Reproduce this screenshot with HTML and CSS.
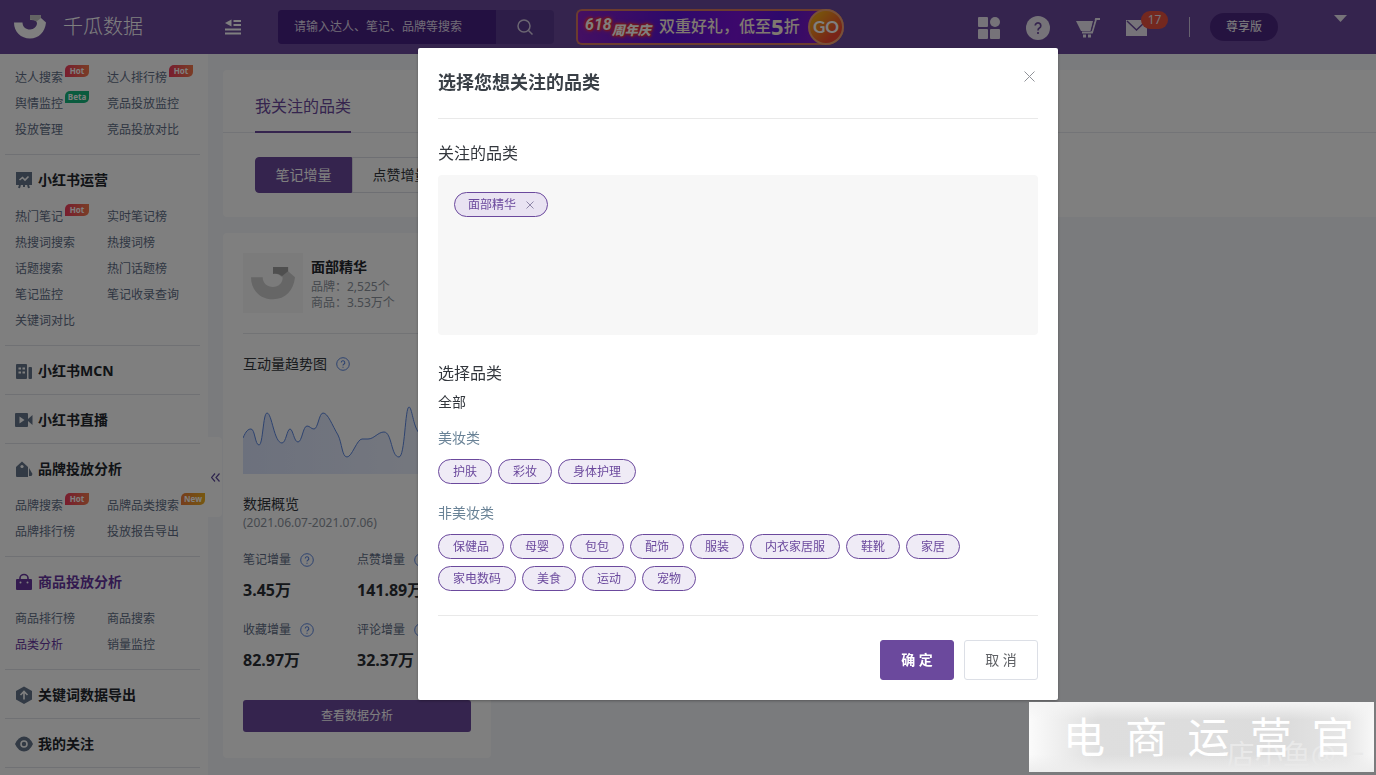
FILE: index.html
```html
<!DOCTYPE html>
<html lang="zh-CN">
<head>
<meta charset="utf-8">
<title>千瓜数据</title>
<link rel="stylesheet" href="styles.css">
</head>
<body>
<svg class="defs" aria-hidden="true">
  <defs>
    <symbol id="logo" viewBox="0 0 32 24">
      <path d="M0 7.500H8.500C8.500 12 12 14.500 16 14.500s7-3 7-6.500c0-2-3-3.500-7-3V0h11v3l5 4.500C31 17 25 23.500 16 23.500S0 17 0 7.500z" fill="currentColor"/>
      <path d="M16 0h11v3l-5 4c-1-2-4-2.500-6-2z" fill="#000" opacity=".22"/>
    </symbol>
    <symbol id="help" viewBox="0 0 14 14">
      <circle cx="7" cy="7" r="6.300" fill="none" stroke="currentColor"/>
      <path d="M5.200 5.500a1.800 1.800 0 1 1 2.600 1.700c-.6.300-.8.600-.8 1.300M7 9.700v1.100" fill="none" stroke="currentColor" stroke-width="1.100"/>
    </symbol>
  </defs>
</svg>

<header class="topbar">
  <a class="brand" href="#"><svg class="brand-mark"><use href="#logo"/></svg><span>千瓜数据</span></a>
  <button class="icon-btn fold" aria-label="收起菜单">
    <svg width="16" height="16" viewBox="0 0 16 16"><path d="M8.500 2H16M8.500 6H16M0 10.500h16M0 14.500h16" stroke="currentColor" stroke-width="1.800"/><path d="M6.500 .5v7L0 4z" fill="currentColor"/></svg>
  </button>
  <form class="search">
    <input type="text" aria-label="搜索" placeholder="请输入达人、笔记、品牌等搜索">
    <button type="button" aria-label="搜索"><svg width="16" height="16" viewBox="0 0 16 16"><circle cx="7" cy="7" r="6" fill="none" stroke="currentColor" stroke-width="1.500"/><path d="M11.500 11.500l4 4" stroke="currentColor" stroke-width="1.500"/></svg></button>
  </form>
  <a class="promo" href="#">
    <span class="promo-tag"><b>618</b><i>周年庆</i></span>
    <span class="promo-text">双重好礼，低至<b>5</b>折</span>
    <span class="promo-go">GO</span>
  </a>
  <nav class="tools">
    <button class="icon-btn" aria-label="应用"><svg width="22" height="22" viewBox="0 0 22 22" fill="currentColor"><rect width="10" height="10" rx="1"/><circle cx="17" cy="5" r="5"/><rect y="12" width="10" height="10" rx="1"/><rect x="12" y="12" width="10" height="10" rx="1"/></svg></button>
    <button class="icon-btn" aria-label="帮助"><svg width="24" height="24" viewBox="0 0 24 24"><circle cx="12" cy="12" r="12" fill="currentColor"/><path d="M9.200 9.600a2.800 2.800 0 1 1 4.200 2.500c-1 .6-1.400 1-1.400 2.400M12 16v2" fill="none" stroke="#6b499d" stroke-width="1.700"/></svg></button>
    <button class="icon-btn" aria-label="购物车"><svg width="24" height="20" viewBox="0 0 24 20"><path d="M0 3h17l-2.500 10H5z" fill="currentColor"/><path d="M24 1h-4l-4 13.500H6" fill="none" stroke="currentColor" stroke-width="2"/><path d="M18.300 2l-3 11" stroke="#6b499d"/><rect x="7" y="16.500" width="3" height="3" fill="currentColor"/><rect x="12" y="16.500" width="3" height="3" fill="currentColor"/></svg></button>
    <button class="icon-btn mail" aria-label="消息"><svg width="22" height="16" viewBox="0 0 22 16"><rect width="21" height="16" fill="currentColor"/><path d="M1 1l9.500 9L20 1" fill="none" stroke="#6b499d" stroke-width="1.500"/></svg><span class="count">17</span></button>
    <span class="rule"></span>
    <button class="plan">尊享版</button>
    <button class="icon-btn caret" aria-label="账户"><svg width="13" height="7" viewBox="0 0 13 7"><path d="M0 0h13L6.500 7z" fill="currentColor"/></svg></button>
  </nav>
</header>

<div class="layout">
  <aside class="sidebar">
    <section>
      <div class="links">
        <a href="#">达人搜索<em class="flag hot">Hot</em></a><a href="#">达人排行榜<em class="flag hot">Hot</em></a>
        <a href="#">舆情监控<em class="flag beta">Beta</em></a><a href="#">竞品投放监控</a>
        <a href="#">投放管理</a><a href="#">竞品投放对比</a>
      </div>
    </section>
    <section>
      <h2><svg viewBox="0 0 18 18"><path d="M1 1h16v13H1z" fill="currentColor"/><path d="M5 14l-1 3M13 14l1 3M9 14v2" stroke="currentColor" stroke-width="2"/><path d="M4.500 9l3-2.500L10 9l3.500-3.500" fill="none" stroke="#fff" stroke-width="1.600"/></svg>小红书运营</h2>
      <div class="links">
        <a href="#">热门笔记<em class="flag hot">Hot</em></a><a href="#">实时笔记榜</a>
        <a href="#">热搜词搜索</a><a href="#">热搜词榜</a>
        <a href="#">话题搜索</a><a href="#">热门话题榜</a>
        <a href="#">笔记监控</a><a href="#">笔记收录查询</a>
        <a href="#">关键词对比</a>
      </div>
    </section>
    <section>
      <h2><svg viewBox="0 0 18 18"><rect x="1" y="2" width="11" height="15" rx="1" fill="currentColor"/><rect x="13.500" y="5" width="3.500" height="12" rx="1" fill="currentColor"/><path d="M3.500 6.500h2.500M7.500 6.500H10M3.500 10.500h2.500M7.500 10.500H10" stroke="#fff" stroke-width="2"/></svg>小红书MCN</h2>
    </section>
    <section>
      <h2><svg viewBox="0 0 18 18"><rect y="2" width="13" height="14" rx="1" fill="currentColor"/><path d="M13 8l4.500-4v10L13 10z" fill="currentColor"/><path d="M4.500 5.500v7l5-3.500z" fill="#fff"/></svg>小红书直播</h2>
    </section>
    <section>
      <h2><svg viewBox="0 0 18 18"><path d="M1 7l6-5.500L13 7v10H2q-1 0-1-1z" fill="currentColor"/><path d="M14 8l3.500 6-1 2H14z" fill="currentColor"/><circle cx="7" cy="6.500" r="1.600" fill="#fff"/></svg>品牌投放分析</h2>
      <div class="links">
        <a href="#">品牌搜索<em class="flag hot">Hot</em></a><a href="#">品牌品类搜索<em class="flag new">New</em></a>
        <a href="#">品牌排行榜</a><a href="#">投放报告导出</a>
      </div>
    </section>
    <section class="active">
      <h2><svg viewBox="0 0 18 18"><rect x="1" y="6" width="16" height="11" rx="1" fill="currentColor"/><path d="M5 7V5a4 3.500 0 0 1 8 0v2" fill="none" stroke="currentColor" stroke-width="1.600"/><circle cx="5.500" cy="9.500" r="1" fill="#fff"/><circle cx="12.500" cy="9.500" r="1" fill="#fff"/></svg>商品投放分析</h2>
      <div class="links">
        <a href="#">商品排行榜</a><a href="#">商品搜索</a>
        <a href="#" class="current">品类分析</a><a href="#">销量监控</a>
      </div>
    </section>
    <section>
      <h2><svg viewBox="0 0 18 18"><path d="M9 0.500l8 4.500v8.500l-8 4.500-8-4.500V5z" fill="currentColor"/><path d="M9 13.500V6M5.500 9L9 5.500 12.500 9" fill="none" stroke="#fff" stroke-width="1.600"/></svg>关键词数据导出</h2>
    </section>
    <section>
      <h2><svg viewBox="0 0 18 18"><path d="M0 9q3.500-7.500 9-7.500T18 9q-3.500 7.500-9 7.500T0 9z" fill="currentColor"/><circle cx="9" cy="9" r="3" fill="none" stroke="#fff" stroke-width="1.600"/></svg>我的关注</h2>
    </section>
    <section></section>
    <button class="handle" aria-label="收起侧栏"><svg width="9" height="9" viewBox="0 0 9 9"><path d="M4 .5l-3.500 4 3.500 4M8.500.5L5 4.500l3.500 4" fill="none" stroke="currentColor" stroke-width="1.200"/></svg></button>
  </aside>

  <main class="main">
    <section class="panel">
      <div class="tabs"><a href="#">我关注的品类</a></div>
      <div class="segments"><button class="on">笔记增量</button><button>点赞增量</button></div>
    </section>
    <article class="card">
      <div class="card-head">
        <div class="thumb"><svg><use href="#logo"/></svg></div>
        <div>
          <h3>面部精华</h3>
          <p>品牌：2,525个</p>
          <p>商品：3.53万个</p>
        </div>
      </div>
      <h4>互动量趋势图<svg class="help"><use href="#help"/></svg></h4>
      <svg class="chart" viewBox="0 0 228 74" preserveAspectRatio="none">
        <defs><linearGradient id="area"><stop offset="0" stop-color="#d9e2fb"/><stop offset="1" stop-color="#eff3fd"/></linearGradient></defs>
        <path fill="url(#area)" d="M0 38C3 31 5 29 8 29c4 0 4 16 8 16s4-32 8-32c5 0 7 30 15 30 4 0 5-14 8-14s4 13 8 13 5-16 9-16c3 0 4 3 7 3 4 0 5-16 9-16 5 0 9 12 15 22 4 8 4 22 9 22s10-18 15-18h6c6 0 10-7 16-7 8 0 7 25 15 25 6 0 6-50 10-50 3 0 4 19 10 26 6 9 12 12 20 4s20-4 34 2V74H0z"/>
        <path fill="none" stroke="#5b86e0" d="M0 38C3 31 5 29 8 29c4 0 4 16 8 16s4-32 8-32c5 0 7 30 15 30 4 0 5-14 8-14s4 13 8 13 5-16 9-16c3 0 4 3 7 3 4 0 5-16 9-16 5 0 9 12 15 22 4 8 4 22 9 22s10-18 15-18h6c6 0 10-7 16-7 8 0 7 25 15 25 6 0 6-50 10-50 3 0 4 19 10 26 6 9 12 12 20 4s20-4 34 2"/>
      </svg>
      <h4 class="overview">数据概览</h4>
      <p class="range">(2021.06.07-2021.07.06)</p>
      <dl class="stats">
        <div><dt>笔记增量<svg class="help"><use href="#help"/></svg></dt><dd>3.45万</dd></div>
        <div><dt>点赞增量<svg class="help"><use href="#help"/></svg></dt><dd>141.89万</dd></div>
        <div><dt>收藏增量<svg class="help"><use href="#help"/></svg></dt><dd>82.97万</dd></div>
        <div><dt>评论增量<svg class="help"><use href="#help"/></svg></dt><dd>32.37万</dd></div>
      </dl>
      <button class="view">查看数据分析</button>
    </article>
  </main>
</div>

<div class="overlay">
  <div class="modal" role="dialog" aria-modal="true" aria-labelledby="modal-title">
    <header class="modal-head">
      <h2 id="modal-title">选择您想关注的品类</h2>
      <button class="close" aria-label="关闭"><svg width="11" height="11" viewBox="0 0 11 11"><path d="M.5.5l10 10M10.500.5l-10 10" stroke="currentColor"/></svg></button>
    </header>
    <div class="modal-body">
      <h3>关注的品类</h3>
      <div class="picked"><button class="tag">面部精华<svg width="8" height="8" viewBox="0 0 8 8"><path d="M.5.5l7 7M7.500.5l-7 7" stroke="#8f86a8"/></svg></button></div>
      <h3>选择品类</h3>
      <p class="all">全部</p>
      <h4>美妆类</h4>
      <div class="tags"><button class="tag">护肤</button><button class="tag">彩妆</button><button class="tag">身体护理</button></div>
      <h4>非美妆类</h4>
      <div class="tags">
        <button class="tag">保健品</button><button class="tag">母婴</button><button class="tag">包包</button><button class="tag">配饰</button><button class="tag">服装</button><button class="tag">内衣家居服</button><button class="tag">鞋靴</button><button class="tag">家居</button><button class="tag">家电数码</button><button class="tag">美食</button><button class="tag">运动</button><button class="tag">宠物</button>
      </div>
    </div>
    <footer class="modal-foot"><button class="btn primary">确 定</button><button class="btn">取 消</button></footer>
  </div>
</div>

<div class="watermark">
  <span class="credit">店小鱼@一</span>
  <div class="brush"><span>电</span><span>商</span><span>运</span><span>营</span><span>官</span></div>
</div>
</body>
</html>
```

FILE: styles.css
```css
* { box-sizing: border-box; margin: 0; padding: 0; }

body {
  height: 100vh;
  overflow: hidden;
  background: #f4f6fa;
  color: #33373d;
  font: 14px/20px "Noto Sans", "Noto Sans CJK SC", sans-serif;
}

button, input { font: inherit; color: inherit; border: 0; background: none; }
button { cursor: pointer; }
a { color: inherit; text-decoration: none; }
svg { display: block; flex: none; }
.defs { position: absolute; width: 0; height: 0; }

/* top bar */
.topbar {
  display: flex;
  align-items: center;
  height: 54px;
  padding: 0 29px 0 14px;
  background: #6b499d;
  color: #fff;
}
.brand { display: flex; align-items: center; gap: 17px; width: 211px; font-size: 20px; line-height: 28px; font-weight: 300; }
.brand-mark { width: 32px; height: 24px; }
.icon-btn { display: flex; align-items: center; }
.fold { width: 53px; }
.search { display: flex; width: 276px; height: 34px; border-radius: 4px; overflow: hidden; background: #5b3b90; }
.search input { flex: 1; min-width: 0; padding: 0 16px; background: #472182; font-size: 12px; }
.search input::placeholder { color: #e0d8ec; opacity: 1; }
.search button { display: flex; align-items: center; justify-content: center; width: 58px; color: #d6cce4; }

.promo {
  display: flex;
  align-items: center;
  justify-content: space-between;
  width: 268px;
  height: 36px;
  margin-left: 22px;
  padding-left: 7px;
  border: 2px solid #d8795f;
  border-right: 0;
  border-radius: 6px 18px 18px 6px;
  background: linear-gradient(100deg, #8c1fc4, #5b12d6 35%, #7a10d8 60%, #5b12d6 75%, #a01fb8);
}
.promo-tag { display: flex; align-items: center; color: #fff; text-shadow: 0 0 2px #f02a2a, 1px 1px 2px #f02a2a, -1px -1px 2px #f02a2a, 0 0 5px #ff5a3c; }
.promo-tag b { font: italic 700 16px/20px Roboto, sans-serif; align-self: flex-start; }
.promo-tag i { font-size: 13px; font-weight: 900; padding-top: 5px; }
.promo-text { display: flex; align-items: center; padding-bottom: 3px; font-size: 16px; font-weight: 500; color: #fff3e0; }
.promo-text b { font-size: 22px; }
.promo-go {
  display: grid;
  place-items: center;
  width: 36px;
  height: 36px;
  border: 2px solid #f0a070;
  border-radius: 50%;
  background: linear-gradient(135deg, #f0a018 20%, #f04830 75%);
  font: 700 17px/20px Lato, sans-serif;
}

.tools { display: flex; align-items: center; gap: 26px; margin-left: auto; }
.tools .icon-btn { padding-top: 2px; color: #ece7f3; }
.mail { position: relative; width: 22px; }
.count {
  position: absolute;
  left: 15px;
  bottom: 7px;
  width: 27px;
  border-radius: 9px;
  background: #e8503f;
  font-size: 12px;
  line-height: 18px;
}
.rule { width: 1px; height: 20px; margin-left: 15px; background: #cfc5df; }
.plan { width: 68px; height: 28px; margin-left: -6px; border-radius: 14px; background: #4b2780; font-size: 12px; }
.caret { margin-left: 30px; height: 28px; align-items: flex-start; }

/* sidebar */
.layout { display: flex; align-items: flex-start; }
.sidebar { position: relative; flex: none; width: 208px; padding: 10px 8px 10px 5px; background: #fff; min-height: calc(100vh - 54px); }
.sidebar section { border-top: 1px solid #e1e3e8; }
.sidebar section:first-child { border-top: 0; }
.sidebar h2 { display: flex; align-items: center; gap: 5px; height: 48px; padding: 2px 0 0 10px; font-size: 14px; color: #22262c; }
.sidebar h2 svg { width: 18px; height: 18px; color: #64748a; }
.links { display: grid; grid-template-columns: 92px 1fr; padding: 1px 0 11px 10px; font-size: 12px; line-height: 26px; color: #606d86; }
.links a { position: relative; justify-self: start; white-space: nowrap; }
.flag {
  position: absolute;
  left: 100%;
  top: 0;
  width: 24px;
  height: 12px;
  margin-left: 2px;
  border-radius: 5px 0 5px 0;
  color: #fff;
  font: 700 8px/12px "Noto Sans", sans-serif;
  text-align: center;
}
.hot { background: linear-gradient(90deg, #f03a5c, #f47a4c); }
.beta { background: #14b67c; }
.new { background: linear-gradient(90deg, #ec7a38, #eeb020); }
.active h2, .active h2 svg, .current { color: #66359f; }
.handle {
  position: absolute;
  left: 208px;
  top: 383px;
  display: grid;
  place-items: center;
  width: 14px;
  height: 80px;
  border-radius: 0 4px 4px 0;
  background: #fff;
  color: #5d4a9c;
}

/* content */
.main { flex: 1; min-width: 0; padding: 16px 0 17px 15px; }
.panel { height: 147px; background: #fff; border-radius: 4px 0 0 4px; }
.tabs { display: flex; height: 63px; padding: 0 32px; border-bottom: 1px solid #e6e8ee; }
.tabs a { height: 63px; padding-top: 24px; border-bottom: 2px solid #6b499d; font-size: 16px; line-height: 24px; color: #6b499d; }
.segments { display: flex; padding: 24px 32px; }
.segments button { width: 97px; height: 36px; border: 1px solid #dcdfe6; }
.segments .on { border-color: #6b499d; border-radius: 4px 0 0 4px; background: #6b499d; color: #fff; }

.card { width: 268px; margin-top: 16px; padding: 20px 20px 26px; border-radius: 4px; background: #fff; }
.card-head { display: flex; gap: 8px; height: 81px; border-bottom: 1px solid #e4e6ea; font-size: 12px; line-height: 16px; color: #8c939d; }
.card-head h3 { margin: 4px 0 2px; font-size: 14px; line-height: 20px; color: #22262c; }
.thumb { display: grid; place-items: center; width: 60px; height: 60px; background: #f6f6f6; color: #ccc; }
.thumb svg { width: 44px; height: 33px; }
.card h4 { display: flex; align-items: center; gap: 9px; margin-top: 20px; font-weight: 400; }
.help { width: 14px; height: 14px; color: #5b86e0; }
.chart { width: 100%; height: 74px; margin-top: 26px; }
.card .overview { line-height: 20px; }
.range { font-size: 12px; line-height: 18px; color: #8c939d; }
.stats { display: grid; grid-template-columns: 1fr 1fr; row-gap: 10px; padding-top: 18px; }
.stats dt { display: flex; align-items: center; gap: 9px; height: 20px; font-size: 12px; color: #606d86; }
.stats dd { padding: 10px 0; font-size: 16px; line-height: 20px; font-weight: 700; color: #2b2e34; }
.view { display: block; width: 100%; height: 32px; margin-top: 20px; border-radius: 3px; background: #6b499d; color: #fff; font-size: 12px; }

/* dialog */
.overlay {
  position: fixed;
  inset: 0;
  display: flex;
  justify-content: center;
  align-items: flex-start;
  padding: 48px 0 0 100px;
  background: rgba(0, 0, 0, .5);
}
.modal { width: 640px; padding: 20px; border-radius: 2px; background: #fff; box-shadow: 0 1px 3px rgba(0, 0, 0, .3); }
.modal-head { display: flex; justify-content: space-between; align-items: flex-start; padding-bottom: 22px; border-bottom: 1px solid #e9e9e9; }
.modal-head h2 { font-size: 18px; line-height: 28px; color: #3a4047; }
.close { padding: 3px; color: #909399; }
.modal-body { padding: 22px 0 24px; }
.modal-body h3 { font-size: 16px; line-height: 24px; font-weight: 400; }
.picked { height: 160px; margin: 10px 0 26px; padding: 17px 16px; border-radius: 4px; background: #f7f7f7; }
.all { margin-top: 7px; }
.modal-body h4 { margin: 16px 0 11px; font-weight: 400; color: #698296; }
.tags { display: flex; flex-wrap: wrap; gap: 7px 6px; padding-right: 60px; }
.tags + h4 { margin-top: 19px; }
.tag {
  display: flex;
  align-items: center;
  gap: 10px;
  height: 25px;
  padding: 0 14px;
  border: 1px solid #6b499d;
  border-radius: 13px;
  background: #efebf6;
  color: #6b499d;
  font-size: 12px;
}
.picked .tag { padding: 0 13px; background: #e9e3f2; }
.modal-foot { display: flex; justify-content: flex-end; gap: 10px; padding-top: 24px; border-top: 1px solid #e9e9e9; }
.btn { width: 74px; height: 40px; border: 1px solid #dcdfe6; border-radius: 3px; color: #606266; }
.primary { border-color: #6b499d; background: #6b499d; color: #fff; font-weight: 700; }

/* corner mark */
.watermark {
  position: fixed;
  right: 2px;
  bottom: 3px;
  width: 345px;
  height: 70px;
  overflow: hidden;
  background:
    linear-gradient(#f4f4f4, transparent 25%, transparent 75%, #ededed),
    linear-gradient(90deg, #fbfbfb, #dedede 20%, #dcdcdc 75%, #e6e6e6 92%, #f8f8f8);
  color: #fff;
}
.brush { position: relative; display: flex; justify-content: space-around; align-items: center; height: 100%; padding: 0 10px 4px 24px; font: 400 42px/60px "Noto Sans CJK SC", sans-serif; }
.credit { position: absolute; right: 10px; bottom: 2px; font-size: 28px; line-height: 32px; color: #e9e9e9; }
```
